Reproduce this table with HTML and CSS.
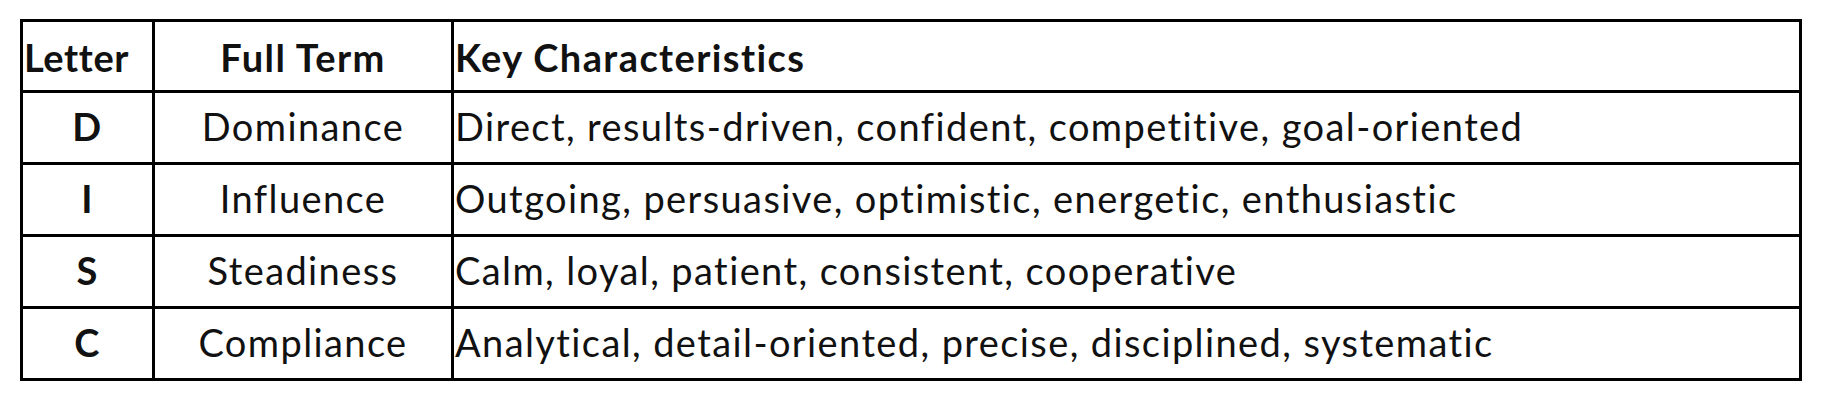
FILE: index.html
```html
<!DOCTYPE html>
<html lang="en">
<head>
<meta charset="utf-8">
<title>DISC</title>
<link rel="stylesheet" href="styles.css">
</head>
<body>
<div class="page">
  <table class="disc">
    <thead>
      <tr>
        <th class="c-letter">Letter</th>
        <th class="c-term">Full Term</th>
        <th class="c-key">Key Characteristics</th>
      </tr>
    </thead>
    <tbody>
      <tr>
        <td class="c-letter">D</td>
        <td class="c-term">Dominance</td>
        <td class="c-key">Direct, results-driven, confident, competitive, goal-oriented</td>
      </tr>
      <tr>
        <td class="c-letter">I</td>
        <td class="c-term">Influence</td>
        <td class="c-key">Outgoing, persuasive, optimistic, energetic, enthusiastic</td>
      </tr>
      <tr>
        <td class="c-letter">S</td>
        <td class="c-term">Steadiness</td>
        <td class="c-key">Calm, loyal, patient, consistent, cooperative</td>
      </tr>
      <tr>
        <td class="c-letter">C</td>
        <td class="c-term">Compliance</td>
        <td class="c-key">Analytical, detail-oriented, precise, disciplined, systematic</td>
      </tr>
    </tbody>
  </table>
</div>
</body>
</html>
```
FILE: styles.css
```css
html, body {
  margin: 0;
  background: #ffffff;
}

.page {
  padding: 19px 0 0 20px;
}

.disc {
  box-sizing: border-box;
  width: 1782px;
  table-layout: fixed;
  border-collapse: separate;
  border-spacing: 0;
  border-left: 3px solid #000;
  border-top: 3px solid #000;
  font-family: Lato, "Liberation Sans", sans-serif;
  font-size: 38px;
  letter-spacing: 1.4px;
  color: #111;
}

.disc th,
.disc td {
  box-sizing: border-box;
  border-right: 3px solid #000;
  border-bottom: 3px solid #000;
  height: 72px;
  padding: 0 0 3px 0;
  vertical-align: middle;
  line-height: 44px;
  white-space: nowrap;
}

.disc th {
  font-weight: 700;
  height: 71px;
  padding: 2px 0 0 0;
}

.c-letter {
  width: 132px;
  text-align: center;
  font-weight: 700;
}

.disc th.c-letter {
  text-align: left;
  padding-left: 1px;
  letter-spacing: 0.6px;
}

.c-term {
  width: 299px;
  text-align: center;
  font-weight: 400;
}

.disc th.c-term {
  font-weight: 700;
}

.disc .c-key {
  text-align: left;
  padding-left: 1px;
}
```
